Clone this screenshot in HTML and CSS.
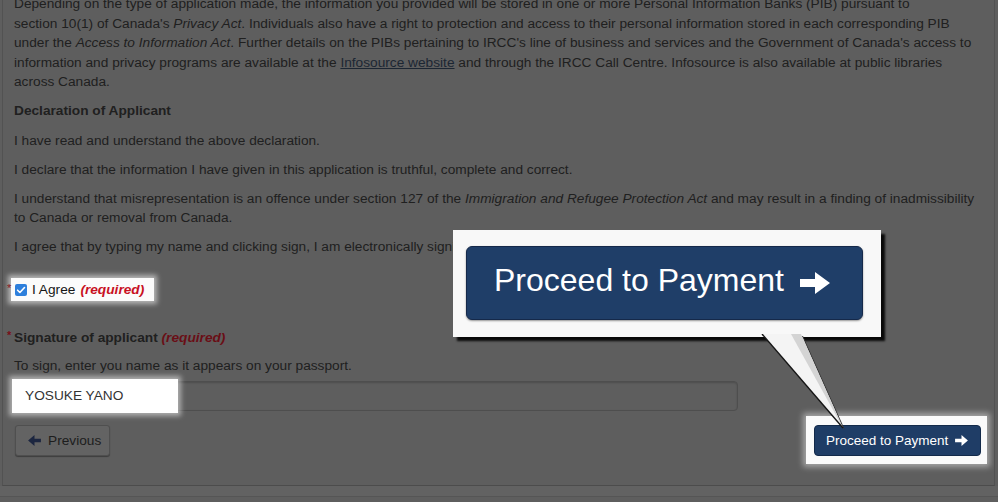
FILE: index.html
```html
<!DOCTYPE html>
<html lang="en">
<head>
<meta charset="utf-8">
<title>Declaration of Applicant</title>
<link rel="stylesheet" href="styles.css">
</head>
<body>
<div class="panel">
  <div class="content">
    <p class="para">Depending on the type of application made, the information you provided will be stored in one or more Personal Information Banks (PIB) pursuant to<br>section 10(1) of Canada's <em>Privacy Act</em>. Individuals also have a right to protection and access to their personal information stored in each corresponding PIB<br>under the <em>Access to Information Act</em>. Further details on the PIBs pertaining to IRCC's line of business and services and the Government of Canada's access to<br>information and privacy programs are available at the <a href="#" class="link">Infosource website</a> and through the IRCC Call Centre. Infosource is also available at public libraries<br>across Canada.</p>
    <h3 class="decl">Declaration of Applicant</h3>
    <p class="para">I have read and understand the above declaration.</p>
    <p class="para">I declare that the information I have given in this application is truthful, complete and correct.</p>
    <p class="para">I understand that misrepresentation is an offence under section 127 of the <em>Immigration and Refugee Protection Act</em> and may result in a finding of inadmissibility<br>to Canada or removal from Canada.</p>
    <p class="para last">I agree that by typing my name and clicking sign, I am electronically signing my application.</p>

    <div class="agree-row">
      <span class="ast ast-agree">*</span>
      <label class="agree-box">
        <span class="checkbox"><svg viewBox="0 0 12 12" width="12" height="12"><path d="M2.6 6.2l2.3 2.3 4.6-5" fill="none" stroke="#fff" stroke-width="1.6" stroke-linecap="round" stroke-linejoin="round"/></svg></span>
        <span class="agree-text">I Agree</span>
        <span class="req-bright">(required)</span>
      </label>
    </div>

    <div class="sig-label"><span class="ast ast-sig">*</span>Signature of applicant <span class="req-dim">(required)</span></div>
    <p class="hint">To sign, enter you name as it appears on your passport.</p>
    <div class="sig-input">
      <span class="sig-value">YOSUKE YANO</span>
    </div>

    <div class="actions">
      <button class="btn-prev" type="button"><svg class="prev-arrow" viewBox="0 0 14 12" width="13" height="11"><path d="M14 4H7V0L0 6l7 6V8h7z" fill="#1c2640"/></svg>Previous</button>
      <div class="proceed-glow">
        <button class="btn-proceed" type="button">Proceed to Payment<svg class="next-arrow" viewBox="0 0 14 12" width="13" height="11"><path d="M0 4h7V0l7 6-7 6V8H0z" fill="#fff"/></svg></button>
      </div>
    </div>
  </div>
</div>
<div class="footer"></div>

<div class="callout">
  <div class="big-btn">Proceed to Payment<svg class="big-arrow" viewBox="0 0 30 22" width="30" height="22"><path d="M0 7h15V0l15 11-15 11v-7H0z" fill="#fff"/></svg></div>
</div>
<svg class="tail" width="120" height="110" viewBox="0 0 120 110">
  <polygon points="21,0 60,0 102,94" fill="#3a3a3a" transform="translate(2,2)"/>
  <polygon points="21,0 60,0 102,94" fill="#f4f4f4"/>
  <polygon points="50,0 60,0 102,94" fill="#d4d4d4"/>
  <line x1="21" y1="0" x2="102" y2="94" stroke="#151515" stroke-width="1.4"/>
</svg>
</body>
</html>
```
FILE: styles.css
```css
* { box-sizing: border-box; }
html, body { margin: 0; padding: 0; }
body {
  width: 998px;
  height: 502px;
  overflow: hidden;
  background: #5e5e5e;
  font-family: "Liberation Sans", Arial, Helvetica, sans-serif;
  font-size: 13.7px;
  color: #202020;
  position: relative;
}
.panel {
  height: 486px;
  margin-left: 2px;
  margin-right: 3px;
  border-left: 1px solid #525252;
  border-right: 1px solid #525252;
  border-bottom: 1px solid #4c4c4c;
  overflow: hidden;
}
.content {
  margin-top: -6px;
  padding-left: 11px;
  padding-right: 6px;
}
.para {
  margin: 0 0 9.5px;
  line-height: 19.6px;
  white-space: nowrap;
}
.para.last { margin-bottom: 0; }
.para em { font-style: italic; }
.link { color: #1c2633; text-decoration: underline; }
.decl {
  margin: 0 0 9.5px;
  font-size: 13.7px;
  line-height: 19.6px;
  font-weight: bold;
}
.agree-row {
  position: relative;
  margin-top: 21px;
  height: 23px;
  display: flex;
}
.ast {
  position: absolute;
  color: #7a0f1a;
  font-size: 11px;
  line-height: 1;
}
.ast-agree { left: -7px; top: 5px; color: #8a1420; }
.ast-sig { left: -7px; top: 2px; }
.agree-box {
  display: flex;
  align-items: center;
  gap: 5px;
  margin-left: -3px;
  padding: 0 10px 0 4px;
  height: 23px;
  background: #fbfbfb;
  box-shadow: 0 0 5px 3px rgba(255,255,255,0.55);
  color: #161616;
}
.checkbox {
  width: 12px;
  height: 12px;
  border-radius: 2px;
  background: #2d7fdc;
  display: flex;
}
.agree-text { font-size: 13.7px; }
.req-bright {
  color: #c8101f;
  font-weight: bold;
  font-style: italic;
}
.sig-label {
  position: relative;
  margin-top: 27px;
  line-height: 19.6px;
  font-weight: bold;
}
.req-dim {
  color: #6a0e16;
  font-style: italic;
  font-weight: bold;
}
.hint {
  margin: 8.5px 0 0;
  line-height: 19.6px;
}
.sig-input {
  position: relative;
  margin-top: 5.5px;
  width: 724px;
  height: 30px;
  border: 1px solid #4e4e4e;
  border-radius: 4px;
  box-shadow: inset 0 1px 2px rgba(0,0,0,0.18);
}
.sig-value {
  position: absolute;
  left: -3px;
  top: -3px;
  width: 166px;
  height: 34px;
  background: #ffffff;
  box-shadow: 0 0 5px 3px rgba(255,255,255,0.5);
  padding-left: 13px;
  line-height: 34px;
  color: #333;
  font-size: 13.7px;
}
.actions {
  display: flex;
  justify-content: space-between;
  align-items: flex-start;
  margin-top: 13.5px;
  padding-right: 1px;
}
.btn-prev {
  display: flex;
  align-items: center;
  gap: 7px;
  margin-left: 1px;
  width: 95px;
  height: 31px;
  padding: 0 0 0 12px;
  background: #636363;
  border: 1px solid #4f4f4f;
  border-radius: 3px;
  box-shadow: 0 1px 1px rgba(0,0,0,0.35);
  font-family: inherit;
  font-size: 13.7px;
  color: #1d1d1d;
}
.proceed-glow {
  margin-top: -9px;
  padding: 9px 6px 8px 8px;
  background: #fafafa;
  box-shadow: 0 0 6px 3px rgba(255,255,255,0.45);
}
.btn-proceed {
  display: flex;
  align-items: center;
  gap: 7px;
  width: 167px;
  height: 31px;
  padding: 0 0 0 11px;
  background: #1f3d66;
  border: 1px solid #132a4a;
  border-radius: 4px;
  color: #fff;
  font-family: inherit;
  font-size: 13.5px;
}
.footer {
  height: 11px;
  background: #626262;
  border-bottom: 1px solid #555;
}
.callout {
  position: absolute;
  left: 453px;
  top: 230px;
  width: 428px;
  height: 107px;
  padding: 16px 0 0 13px;
  background: #f8f8f8;
  box-shadow: 4px 4px 2px rgba(0,0,0,0.9);
}
.big-btn {
  display: flex;
  align-items: center;
  gap: 16px;
  width: 397px;
  height: 74px;
  padding: 0 0 5px 27px;
  background: #1f3e68;
  border: 1px solid #15294a;
  border-radius: 6px;
  box-shadow: 0 1px 2px rgba(0,0,0,0.4);
  color: #fff;
  font-size: 32px;
}
.big-arrow { margin-top: 4px; }
.tail {
  position: absolute;
  left: 741px;
  top: 334px;
}
```
